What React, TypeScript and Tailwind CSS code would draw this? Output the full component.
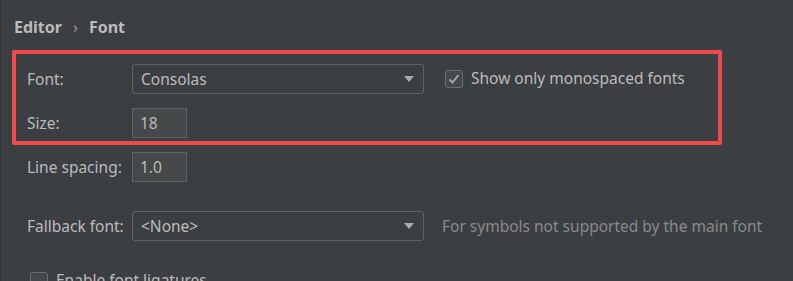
import React from 'react';

const Arrow = () => (
  <svg width="10" height="6" viewBox="0 0 10 6" className="text-[#a9abad]">
    <path d="M0 0 H10 L5 6 Z" fill="currentColor" />
  </svg>
);

const Combo = ({ value }: { value: string }) => (
  <div className="flex h-[30px] w-[292px] items-center justify-between rounded-[3px] border border-[#5e6263] bg-[#3c3f41] pl-[8px] pr-[9px]">
    <span className="pt-[1px]">{value}</span>
    <Arrow />
  </div>
);

const Field = ({ value }: { value: string }) => (
  <div className="flex h-[30px] w-[55px] items-center border border-[#5f6364] bg-[#45494a] pl-[7px] pt-[1px]">
    {value}
  </div>
);

const Check = ({ checked }: { checked?: boolean }) => (
  <div className="flex h-[18px] w-[18px] items-center justify-center rounded-[3px] border border-[#6b6e70] bg-[#43494a]">
    {checked && (
      <svg width="12" height="12" viewBox="0 0 12 12">
        <path d="M1.5 6.5 L4.5 9.5 L10.5 2" stroke="#a7a9ab" strokeWidth="2" fill="none" />
      </svg>
    )}
  </div>
);

const Row = ({ label, children }: { label: string; children: React.ReactNode }) => (
  <div className="flex items-center">
    <span className="w-[105px] shrink-0 pt-[1px]">{label}</span>
    {children}
  </div>
);

export default function App() {
  return (
    <div
      className="h-[281px] w-[793px] overflow-hidden border-l border-[#323435] bg-[#3c3f41] text-[15.5px] text-[#bbbbbb]"
      style={{ fontFamily: '"Noto Sans", "Open Sans", sans-serif' }}
    >
      <div className="flex h-[50px] items-center pl-[13px] pt-[3px] text-[16px] font-bold">
        <span>Editor</span>
        <span className="mx-[11px] font-normal text-[#9a9c9e]">›</span>
        <span>Font</span>
      </div>

      <div className="ml-[11px] w-[710px] rounded-[2px] border-[4px] border-[#f04a4f] pl-[11px] pt-[10px] pb-[3px]">
        <div className="flex flex-col gap-[14px]">
          <Row label="Font:">
            <Combo value="Consolas" />
            <div className="ml-[21px] flex items-center gap-[8px]">
              <Check checked />
              <span>Show only monospaced fonts</span>
            </div>
          </Row>
          <Row label="Size:">
            <Field value="18" />
          </Row>
        </div>
      </div>

      <div className="mt-[7px] pl-[26px]">
        <Row label="Line spacing:">
          <Field value="1.0" />
        </Row>
        <div className="mt-[29px]">
          <Row label="Fallback font:">
            <Combo value="<None>" />
            <span className="ml-[18px] pt-[1px] text-[#888a8c]">For symbols not supported by the main font</span>
          </Row>
        </div>
        <div className="mt-[28px] flex items-center gap-[8px] pl-[3px]">
          <Check />
          <span>Enable font ligatures</span>
        </div>
      </div>
    </div>
  );
}
